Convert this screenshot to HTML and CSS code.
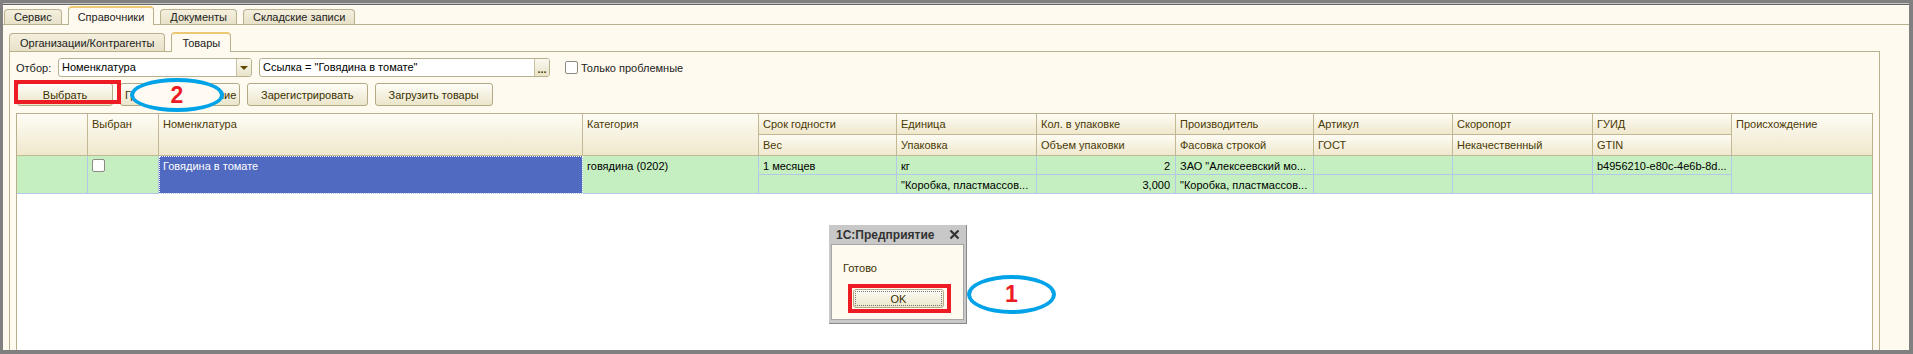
FILE: index.html
```html
<!DOCTYPE html>
<html lang="ru">
<head>
    <meta charset="UTF-8">
    <meta name="viewport" content="width=device-width, initial-scale=1.0">
    <title>Справочники - Товары</title>
    <link rel="stylesheet" href="styles.css">
</head>
<body>

<div class="window">
    <div class="main-tabs">
        <div class="tab">Сервис</div>
        <div class="tab active">Справочники</div>
        <div class="tab">Документы</div>
        <div class="tab">Складские записи</div>
    </div>

    <div class="sub-tabs">
        <div class="tab">Организации/Контрагенты</div>
        <div class="tab active">Товары</div>
    </div>

    <div class="panel">
        <div class="filter-row">
            <span class="filter-label">Отбор:</span>
            <div class="field field-kind">
                <span class="field-text">Номенклатура</span>
                <span class="field-btn"><span class="arrow"></span></span>
            </div>
            <div class="field field-value">
                <span class="field-text">Ссылка = "Говядина в томате"</span>
                <span class="field-btn dots">...</span>
            </div>
            <span class="check"></span>
            <span class="check-label">Только проблемные</span>
        </div>

        <div class="button-row">
            <button class="btn btn-select">Выбрать</button>
            <button class="btn btn-group">Групповое изменение</button>
            <button class="btn">Зарегистрировать</button>
            <button class="btn">Загрузить товары</button>
        </div>

        <div class="grid">
            <table>
                <colgroup>
                    <col style="width:71px"><col style="width:71px"><col style="width:424px">
                    <col style="width:176px"><col style="width:138px"><col style="width:140px">
                    <col style="width:139px"><col style="width:138px"><col style="width:139px">
                    <col style="width:140px"><col style="width:139px"><col style="width:140px">
                </colgroup>
                <thead>
                    <tr class="head-row">
                        <th rowspan="2"></th>
                        <th rowspan="2">Выбран</th>
                        <th rowspan="2">Номенклатура</th>
                        <th rowspan="2">Категория</th>
                        <th>Срок годности</th>
                        <th>Единица</th>
                        <th>Кол. в упаковке</th>
                        <th>Производитель</th>
                        <th>Артикул</th>
                        <th>Скоропорт</th>
                        <th>ГУИД</th>
                        <th rowspan="2" class="last">Происхождение</th>
                    </tr>
                    <tr class="head-row">
                        <th>Вес</th>
                        <th>Упаковка</th>
                        <th>Объем упаковки</th>
                        <th>Фасовка строкой</th>
                        <th>ГОСТ</th>
                        <th>Некачественный</th>
                        <th>GTIN</th>
                    </tr>
                </thead>
                <tbody>
                    <tr class="data-row">
                        <td rowspan="2"></td>
                        <td rowspan="2"><span class="check"></span></td>
                        <td rowspan="2" class="current">Говядина в томате</td>
                        <td rowspan="2">говядина (0202)</td>
                        <td>1 месяцев</td>
                        <td>кг</td>
                        <td class="num">2</td>
                        <td>ЗАО "Алексеевский мо...</td>
                        <td></td>
                        <td></td>
                        <td>b4956210-e80c-4e6b-8d...</td>
                        <td rowspan="2" class="last"></td>
                    </tr>
                    <tr class="data-row">
                        <td></td>
                        <td>"Коробка, пластмассов...</td>
                        <td class="num">3,000</td>
                        <td>"Коробка, пластмассов...</td>
                        <td></td>
                        <td></td>
                        <td></td>
                    </tr>
                </tbody>
            </table>
        </div>
    </div>

    <!-- пометки поверх скриншота -->
    <div class="mark-box mark-select"></div>
    <div class="mark-oval mark-oval-2"><span>2</span></div>

    <div class="dialog">
        <div class="dialog-title">
            <span>1С:Предприятие</span>
            <svg class="dialog-close" width="11" height="11" viewBox="0 0 11 11">
                <path d="M1.5 1.5 L9.5 9.5 M9.5 1.5 L1.5 9.5" stroke="#333" stroke-width="2.2" fill="none"/>
            </svg>
        </div>
        <div class="dialog-body">
            <div class="dialog-text">Готово</div>
            <button class="btn ok-btn">OK</button>
        </div>
    </div>
    <div class="mark-box mark-ok"></div>
    <div class="mark-oval mark-oval-1"><span>1</span></div>
</div>

</body>
</html>
```

FILE: styles.css
```css
body {
    margin: 0;
    padding: 0;
    background-color: #808080;
    font-family: "Liberation Sans", Arial, sans-serif;
    font-size: 11px;
    color: #1e1a0c;
}
.window {
    position: relative;
    margin: 3px 4px 0 3px;
    height: 346px;
    background-color: #fffaef;
    border-top: 1px solid #c4c4c4;
    box-shadow: inset 0 1px 0 #666;
    overflow: hidden;
}

/* tabs */
.main-tabs {
    display: flex;
    align-items: flex-end;
    gap: 6px;
    height: 20px;
    padding-left: 1px;
    border-bottom: 1px solid #b9b08e;
}
.sub-tabs {
    display: flex;
    align-items: flex-end;
    gap: 6px;
    height: 19px;
    margin: 7px 29px 0 6px;
    border-bottom: 1px solid #b9b08e;
}
.tab {
    height: 14px;
    line-height: 14px;
    padding: 0 9px;
    border: 1px solid #b9b08e;
    border-bottom: none;
    border-radius: 4px 4px 0 0;
    background: linear-gradient(#f4f0de, #e7e1c8);
    color: #222;
    font-size: 11px;
}
.sub-tabs .tab {
    height: 17px;
    line-height: 18px;
    padding: 0 10px;
}
.tab.active {
    height: 17px;
    line-height: 18px;
    margin-bottom: -1px;
    background: #fffaef;
    border-top: 2px solid #edc872;
}
.sub-tabs .tab.active {
    height: 18px;
}

/* panel */
.panel {
    margin: 0 29px 0 6px;
    padding: 6px 6px 0 6px;
    height: 300px;
    border-left: 1px solid #b9b08e;
    border-right: 1px solid #b9b08e;
}
.filter-row {
    display: flex;
    align-items: center;
    height: 19px;
}
.filter-label {
    width: 42px;
    color: #222;
}
.field {
    display: flex;
    height: 17px;
    border: 1px solid #b9b08e;
    border-radius: 3px;
    background: #fff;
    overflow: hidden;
}
.field-kind {
    width: 192px;
}
.field-value {
    width: 289px;
    margin-left: 7px;
}
.field-text {
    flex: 1;
    padding-left: 3px;
    line-height: 17px;
    color: #000;
}
.field-btn {
    width: 14px;
    border-left: 1px solid #c9c0a0;
    background: linear-gradient(#fbf9ef, #e9e3ca);
    display: flex;
    align-items: center;
    justify-content: center;
}
.field-btn.dots {
    align-items: flex-end;
    line-height: 13px;
    color: #4a3c00;
    font-weight: bold;
}
.arrow {
    width: 0;
    height: 0;
    border-left: 4px solid transparent;
    border-right: 4px solid transparent;
    border-top: 4px solid #5c4800;
}
.check {
    display: inline-block;
    width: 11px;
    height: 11px;
    border: 1px solid #8c8c84;
    border-radius: 2px;
    background: #fff;
}
.filter-row .check {
    margin-left: 15px;
}
.check-label {
    margin-left: 3px;
    color: #222;
}

.button-row {
    display: flex;
    gap: 7px;
    margin: 6px 0 0 1px;
}
.btn {
    height: 23px;
    padding: 0 13px;
    border: 1px solid #b4a985;
    border-radius: 3px;
    background: linear-gradient(#fefdf8, #ebe5ca);
    font-family: inherit;
    font-size: 11px;
    color: #3a3000;
}
.btn-select {
    width: 96px;
}
.btn-group {
    width: 120px;
    padding: 0 4px;
    white-space: nowrap;
}

/* grid */
.grid {
    margin-top: 7px;
    height: 240px;
    border-top: 1px solid #b9b08e;
    border-left: 1px solid #b9b08e;
    border-right: 1px solid #b9b08e;
    background: #fff;
}
.grid table {
    width: 1855px;
    table-layout: fixed;
    border-spacing: 0;
}
.grid th,
.grid td {
    padding: 3px 5px 0 4px;
    vertical-align: top;
    text-align: left;
    line-height: 14px;
    white-space: nowrap;
    overflow: hidden;
}
.grid th {
    font-weight: normal;
    color: #4a3a05;
    background: linear-gradient(#fefcf4, #efe8cd);
    border-right: 1px solid #c2b893;
    border-bottom: 1px solid #c2b893;
}
.grid td {
    color: #000;
    background: #c5efc0;
    border-right: 1px solid #b3c7e6;
    border-bottom: 1px solid #b3c7e6;
}
.grid .last {
    border-right: none;
}
.head-row {
    height: 21px;
}
.data-row {
    height: 19px;
}
.grid td.num {
    text-align: right;
}
.grid td.current {
    background: #5069c1;
    color: #fff;
    outline: 1px dotted #fff;
    outline-offset: -1px;
}

/* dialog */
.dialog {
    position: absolute;
    left: 826px;
    top: 221px;
    width: 138px;
    height: 99px;
    box-sizing: border-box;
    padding: 0 2px 2px 2px;
    background: #c8c8c8;
    border-right: 1px solid #8a8a8a;
    border-bottom: 1px solid #8a8a8a;
}
.dialog-title {
    display: flex;
    align-items: center;
    justify-content: space-between;
    height: 19px;
    padding: 0 4px 0 5px;
    font-size: 12px;
    font-weight: bold;
    color: #333;
}
.dialog-body {
    height: 76px;
    box-sizing: border-box;
    border: 1px solid #a6a6a6;
    background: #fffaef;
    padding: 16px 0 0 11px;
}
.dialog-text {
    line-height: 14px;
    color: #3a3000;
}
.ok-btn {
    width: 91px;
    height: 19px;
    margin: 14px 0 0 10px;
    padding: 0;
    outline: 1px dotted #777;
    outline-offset: -3px;
}

/* annotations */
.mark-box {
    position: absolute;
    box-sizing: border-box;
    border: 4px solid #ed1c24;
}
.mark-select {
    left: 11px;
    top: 76px;
    width: 107px;
    height: 24px;
}
.mark-ok {
    left: 845px;
    top: 280px;
    width: 103px;
    height: 29px;
}
.mark-oval {
    position: absolute;
    box-sizing: border-box;
    border: 4px solid #00a2e8;
    border-radius: 50%;
    background: #fff;
    display: flex;
    align-items: center;
    justify-content: center;
    color: #ed1c24;
    font-size: 23px;
    font-weight: bold;
}
.mark-oval-2 {
    left: 127px;
    top: 74px;
    width: 94px;
    height: 34px;
    background: #fffbf3;
}
.mark-oval-1 {
    left: 964px;
    top: 271px;
    width: 89px;
    height: 39px;
}
```
